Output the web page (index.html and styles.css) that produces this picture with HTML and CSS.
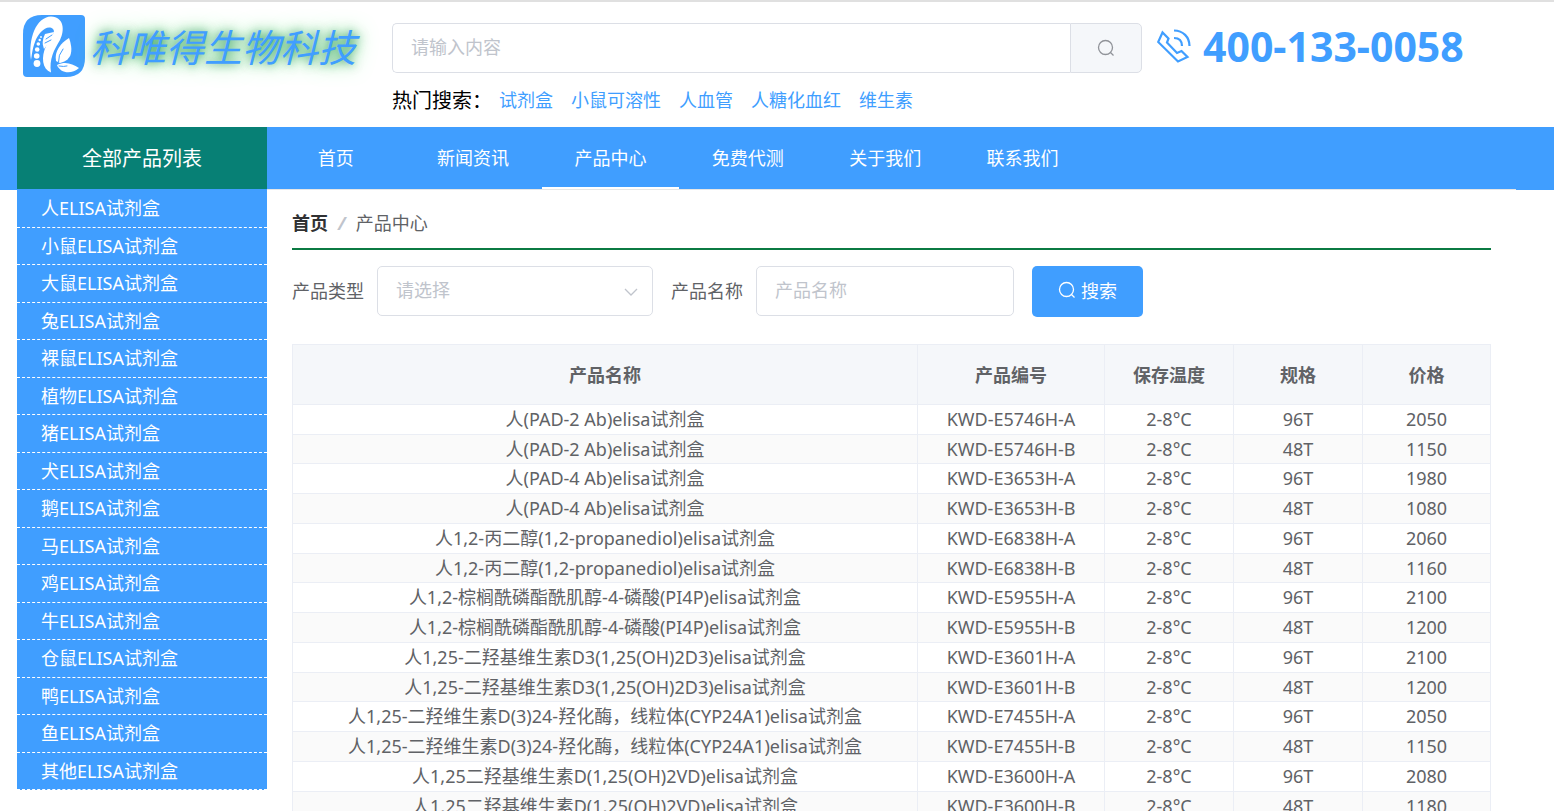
FILE: index.html
```html
<!DOCTYPE html>
<html lang="zh-CN">
<head>
<meta charset="utf-8">
<title>科唯得生物科技 - 产品中心</title>
<link rel="stylesheet" href="styles.css">
</head>
<body>
<header class="header">
  <a class="brand" href="#">
    <svg class="brand-logo" viewBox="0 0 62 62" aria-hidden="true">
      <path fill="#409eff" d="M19 0H58Q62 0 62 4V43Q62 62 43 62H4Q0 62 0 58V19Q0 0 19 0Z"/>
      <g fill="#fff">
        <path d="M8 45C5 24 13 2 28 1.500C41 2 42 15 37 25C31 35 26 44 28 57.500C19 54 18 42 23 31C28 22 33 17 30 14C24 9 15 18 12 27C9 35 9 40 8 45Z"/>
        <circle cx="14" cy="48.500" r="3.400"/><circle cx="13.700" cy="41" r="2.800"/><circle cx="14.200" cy="34.500" r="2.300"/>
        <circle cx="15.300" cy="29" r="1.800"/><circle cx="16.700" cy="25" r="1.200"/><circle cx="18" cy="22" r="0.900"/>
        <path d="M22 19L31 17L29 24L21 34Q18 27 22 19Z"/>
        <path d="M46 23C50 34 50 45 37 48L33 46C31 36 38 28 46 23Z"/>
        <path d="M34 50C43 46 49 49 56 53C48 60 37 58 34 50Z"/>
      </g>
      <g fill="none" stroke="#409eff" stroke-linecap="round">
        <path d="M23 24L29 20M22 28L28 25"/>
        <path d="M35.500 47Q35 40 40 34"/>
        <path d="M36 51Q41 52 44 51"/>
      </g>
    </svg>
    <span class="brand-name">科唯得生物科技</span>
  </a>
  <div class="search">
    <form class="search-box">
      <input class="search-input" type="text" placeholder="请输入内容" aria-label="搜索内容">
      <button class="search-button" type="button" aria-label="搜索">
        <svg class="icon" viewBox="0 0 18 18"><circle cx="8.500" cy="8.500" r="7"/><path d="M13.500 13.500L16.500 16.500"/></svg>
      </button>
    </form>
    <div class="hot">
      <span class="hot-title">热门搜索：</span>
      <a href="#">试剂盒</a><a href="#">小鼠可溶性</a><a href="#">人血管</a><a href="#">人糖化血红</a><a href="#">维生素</a>
    </div>
  </div>
  <div class="phone">
    <svg class="phone-icon" viewBox="0 0 34 34" aria-hidden="true">
      <path d="M5.500 3.500L1.200 13L21 32.500L30.500 28L24.500 22L20 24L10 13.500L11.500 9.500Z"/>
      <path d="M17 1.500C26 1.500 32.500 8 32.500 17M17 9C22 9 25 12 25 17"/>
    </svg>
    <span>400-133-0058</span>
  </div>
</header>

<div class="navbar">
  <div class="navbar-title">全部产品列表</div>
  <nav class="nav">
    <a href="#">首页</a>
    <a href="#">新闻资讯</a>
    <a class="active" href="#">产品中心</a>
    <a href="#">免费代测</a>
    <a href="#">关于我们</a>
    <a href="#">联系我们</a>
  </nav>
</div>

<div class="content">
  <aside class="sidebar">
    <a href="#">人ELISA试剂盒</a>
    <a href="#">小鼠ELISA试剂盒</a>
    <a href="#">大鼠ELISA试剂盒</a>
    <a href="#">兔ELISA试剂盒</a>
    <a href="#">裸鼠ELISA试剂盒</a>
    <a href="#">植物ELISA试剂盒</a>
    <a href="#">猪ELISA试剂盒</a>
    <a href="#">犬ELISA试剂盒</a>
    <a href="#">鹅ELISA试剂盒</a>
    <a href="#">马ELISA试剂盒</a>
    <a href="#">鸡ELISA试剂盒</a>
    <a href="#">牛ELISA试剂盒</a>
    <a href="#">仓鼠ELISA试剂盒</a>
    <a href="#">鸭ELISA试剂盒</a>
    <a href="#">鱼ELISA试剂盒</a>
    <a href="#">其他ELISA试剂盒</a>
  </aside>
  <main class="main">
    <div class="breadcrumb"><a href="#">首页</a><span class="slash">/</span><span>产品中心</span></div>
    <form class="filter">
      <label for="type">产品类型</label>
      <div class="select-wrap">
        <select id="type" class="field"><option>请选择</option></select>
        <svg class="arrow" viewBox="0 0 14 8" aria-hidden="true"><path d="M1 1L7 7L13 1"/></svg>
      </div>
      <label for="name">产品名称</label>
      <input id="name" class="field name-field" type="text" placeholder="产品名称">
      <button class="submit" type="button">
        <svg class="icon" viewBox="0 0 18 18"><circle cx="8.500" cy="8.500" r="7"/><path d="M13.500 13.500L16.500 16.500"/></svg>
        <span>搜索</span>
      </button>
    </form>
    <table class="products">
      <colgroup><col><col class="col-code"><col class="col-small"><col class="col-small"><col class="col-price"></colgroup>
      <thead><tr><th>产品名称</th><th>产品编号</th><th>保存温度</th><th>规格</th><th>价格</th></tr></thead>
      <tbody>
        <tr><td>人(PAD-2 Ab)elisa试剂盒</td><td>KWD-E5746H-A</td><td>2-8°C</td><td>96T</td><td>2050</td></tr>
        <tr><td>人(PAD-2 Ab)elisa试剂盒</td><td>KWD-E5746H-B</td><td>2-8°C</td><td>48T</td><td>1150</td></tr>
        <tr><td>人(PAD-4 Ab)elisa试剂盒</td><td>KWD-E3653H-A</td><td>2-8°C</td><td>96T</td><td>1980</td></tr>
        <tr><td>人(PAD-4 Ab)elisa试剂盒</td><td>KWD-E3653H-B</td><td>2-8°C</td><td>48T</td><td>1080</td></tr>
        <tr><td>人1,2-丙二醇(1,2-propanediol)elisa试剂盒</td><td>KWD-E6838H-A</td><td>2-8°C</td><td>96T</td><td>2060</td></tr>
        <tr><td>人1,2-丙二醇(1,2-propanediol)elisa试剂盒</td><td>KWD-E6838H-B</td><td>2-8°C</td><td>48T</td><td>1160</td></tr>
        <tr><td>人1,2-棕榈酰磷酯酰肌醇-4-磷酸(PI4P)elisa试剂盒</td><td>KWD-E5955H-A</td><td>2-8°C</td><td>96T</td><td>2100</td></tr>
        <tr><td>人1,2-棕榈酰磷酯酰肌醇-4-磷酸(PI4P)elisa试剂盒</td><td>KWD-E5955H-B</td><td>2-8°C</td><td>48T</td><td>1200</td></tr>
        <tr><td>人1,25-二羟基维生素D3(1,25(OH)2D3)elisa试剂盒</td><td>KWD-E3601H-A</td><td>2-8°C</td><td>96T</td><td>2100</td></tr>
        <tr><td>人1,25-二羟基维生素D3(1,25(OH)2D3)elisa试剂盒</td><td>KWD-E3601H-B</td><td>2-8°C</td><td>48T</td><td>1200</td></tr>
        <tr><td>人1,25-二羟维生素D(3)24-羟化酶，线粒体(CYP24A1)elisa试剂盒</td><td>KWD-E7455H-A</td><td>2-8°C</td><td>96T</td><td>2050</td></tr>
        <tr><td>人1,25-二羟维生素D(3)24-羟化酶，线粒体(CYP24A1)elisa试剂盒</td><td>KWD-E7455H-B</td><td>2-8°C</td><td>48T</td><td>1150</td></tr>
        <tr><td>人1,25二羟基维生素D(1,25(OH)2VD)elisa试剂盒</td><td>KWD-E3600H-A</td><td>2-8°C</td><td>96T</td><td>2080</td></tr>
        <tr><td>人1,25二羟基维生素D(1,25(OH)2VD)elisa试剂盒</td><td>KWD-E3600H-B</td><td>2-8°C</td><td>48T</td><td>1180</td></tr>
      </tbody>
    </table>
  </main>
</div>
</body>
</html>
```
FILE: styles.css
```css
* { box-sizing: border-box; }

html { scrollbar-width: none; }

body {
  margin: 0;
  border-top: 2px solid #e0e0e0;
  background: #fff;
  color: #606266;
  font-family: "Noto Sans", "Noto Sans CJK SC", sans-serif;
  font-size: 18px;
  font-weight: 400;
}

a { color: inherit; text-decoration: none; }

input, select, button { font: inherit; margin: 0; }

.icon {
  width: 18px;
  height: 18px;
  fill: none;
  stroke: currentColor;
  stroke-width: 1.3;
}

/* Header */
.header {
  display: flex;
  align-items: flex-start;
  height: 125px;
  padding: 13px 38px 0 23px;
}

.brand {
  display: flex;
  align-items: flex-start;
  width: 369px;
  flex: none;
  gap: 5px;
}

.brand-logo { width: 62px; height: 62px; }

.brand-name {
  color: #409eff;
  font-size: 38px;
  font-style: italic;
  line-height: 64px;
  white-space: nowrap;
  text-shadow: 0 0 10px rgba(0, 110, 50, 0.7), 0 0 20px #50e070;
}

.search { flex: 0 1 750px; padding-top: 8px; }

.search-box { display: flex; height: 50px; }

.search-input {
  flex: 1;
  min-width: 0;
  padding: 0 18px 2px;
  border: 1px solid #dcdfe6;
  border-right: 0;
  border-radius: 5px 0 0 5px;
  outline: 0;
}

::placeholder { color: #c0c4cc; opacity: 1; }

.search-button {
  display: grid;
  place-items: center;
  width: 72px;
  padding: 0;
  border: 1px solid #dcdfe6;
  border-radius: 0 5px 5px 0;
  background: #f5f7fa;
  color: #909399;
}

.hot {
  display: flex;
  align-items: flex-start;
  gap: 18px;
  margin-top: 12px;
  line-height: 30px;
  color: #409eff;
  white-space: nowrap;
}

.hot-title {
  width: 89px;
  color: #000;
  font-size: 20px;
  line-height: 32px;
}

.phone {
  display: flex;
  align-items: center;
  gap: 12px;
  margin-left: 15px;
  color: #409eff;
  font-size: 41px;
  font-weight: 700;
  line-height: 62px;
  white-space: nowrap;
}

.phone-icon {
  width: 34px;
  height: 34px;
  fill: none;
  stroke: currentColor;
  stroke-width: 2.2;
}

/* Navigation */
.navbar {
  display: flex;
  height: 63px;
  padding: 0 38px 0 17px;
  background: #409eff;
  color: #fff;
}

.navbar-title {
  width: 250px;
  height: 62px;
  background: #078075;
  font-size: 20px;
  line-height: 64px;
  text-align: center;
}

.nav {
  display: flex;
  flex: 1;
  border-bottom: 1px solid #e6e6e6;
}

.nav a {
  flex: 0 0 11%;
  line-height: 62px;
  text-align: center;
}

.nav .active {
  border-bottom: 2px solid #fff;
}

/* Content */
.content {
  display: flex;
  align-items: flex-start;
  padding: 0 38px 0 17px;
}

.sidebar {
  width: 250px;
  flex: none;
  background: #409eff;
  color: #fff;
}

.sidebar a {
  display: block;
  padding-left: 24px;
  border-bottom: 1px dashed #fff;
  line-height: 36px;
}

.sidebar a:nth-child(odd) { line-height: 37px; }

.main { flex: 1; min-width: 0; padding: 0 25px; }

.breadcrumb {
  padding: 19px 0 11px;
  border-bottom: 2px solid #0b7a43;
  line-height: 28px;
}

.breadcrumb a { color: #303133; font-weight: 700; }

.slash {
  margin: 0 10px;
  color: #c0c4cc;
  font-style: italic;
  font-weight: 700;
}

.filter {
  display: flex;
  align-items: flex-start;
  height: 51px;
  margin: 16px 0 27px;
}

.filter label {
  margin-right: 13px;
  line-height: 50px;
  white-space: nowrap;
}

.select-wrap {
  position: relative;
  width: 276px;
  margin-right: 18px;
}

.field {
  width: 100%;
  height: 50px;
  padding: 0 18px 2px;
  border: 1px solid #dcdfe6;
  border-radius: 5px;
  outline: 0;
  background: #fff;
  color: #c0c4cc;
  appearance: none;
}

.name-field { width: 258px; }

.arrow {
  position: absolute;
  top: 22px;
  right: 15px;
  width: 14px;
  height: 8px;
  fill: none;
  stroke: #c0c4cc;
  stroke-width: 1.3;
  pointer-events: none;
}

.submit {
  display: flex;
  align-items: center;
  justify-content: center;
  gap: 5px;
  width: 111px;
  height: 51px;
  margin-left: 18px;
  padding: 0 0 3px;
  border: 0;
  border-radius: 5px;
  background: #409eff;
  color: #fff;
}

.products {
  width: 100%;
  table-layout: fixed;
  border-spacing: 0;
  border-top: 1px solid #ebeef5;
  border-left: 1px solid #ebeef5;
  text-align: center;
}

.col-code { width: 187px; }
.col-small { width: 129px; }
.col-price { width: 128px; }

.products th,
.products td {
  padding: 0;
  border-right: 1px solid #ebeef5;
  border-bottom: 1px solid #ebeef5;
  line-height: 29px;
  white-space: nowrap;
}

.products th {
  padding-top: 2px;
  background: #f5f7fa;
  font-weight: 700;
  line-height: 57px;
}

.products tbody tr:nth-child(even) { background: #fafafa; }
.products tbody tr:nth-child(4n+2) td { line-height: 28px; }
```
